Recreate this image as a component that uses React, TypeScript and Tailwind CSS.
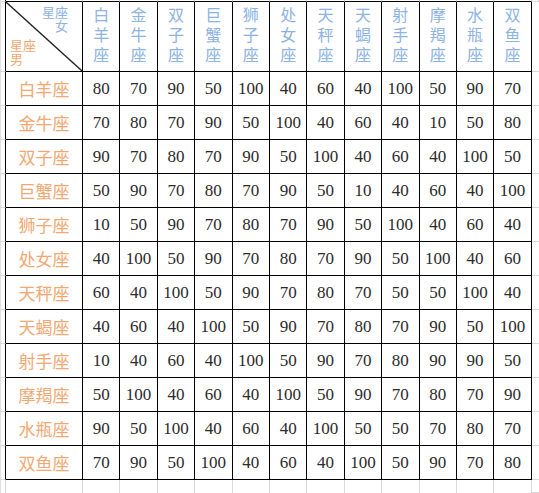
import React from "react";

const signs = ["白羊座", "金牛座", "双子座", "巨蟹座", "狮子座", "处女座", "天秤座", "天蝎座", "射手座", "摩羯座", "水瓶座", "双鱼座"];

const data: number[][] = [
  [80, 70, 90, 50, 100, 40, 60, 40, 100, 50, 90, 70],
  [70, 80, 70, 90, 50, 100, 40, 60, 40, 10, 50, 80],
  [90, 70, 80, 70, 90, 50, 100, 40, 60, 40, 100, 50],
  [50, 90, 70, 80, 70, 90, 50, 10, 40, 60, 40, 100],
  [10, 50, 90, 70, 80, 70, 90, 50, 100, 40, 60, 40],
  [40, 100, 50, 90, 70, 80, 70, 90, 50, 100, 40, 60],
  [60, 40, 100, 50, 90, 70, 80, 70, 50, 50, 100, 40],
  [40, 60, 40, 100, 50, 90, 70, 80, 70, 90, 50, 100],
  [10, 40, 60, 40, 100, 50, 90, 70, 80, 90, 90, 50],
  [50, 100, 40, 60, 40, 100, 50, 90, 70, 80, 70, 90],
  [90, 50, 100, 40, 60, 40, 100, 50, 50, 70, 80, 70],
  [70, 90, 50, 100, 40, 60, 40, 100, 50, 90, 70, 80],
];

const cjk = { fontFamily: '"Noto Sans CJK SC", sans-serif' };
const num = { fontFamily: '"Liberation Serif", serif' };

export default function App() {
  const cells: React.ReactNode[] = [];
  for (let r = 0; r < 15; r++) {
    for (let c = 0; c < 15; c++) {
      const key = `${r}-${c}`;
      const inTableRow = r >= 1 && r <= 13;
      const inTableCol = c >= 1 && c <= 13;
      if (inTableRow && inTableCol) {
        if (r === 1 && c === 1) {
          cells.push(
            <div key={key} className="relative border-r border-b border-black flex flex-col justify-between" style={cjk}>
              <svg className="absolute inset-0" width="100%" height="100%" viewBox="0 0 76 69" preserveAspectRatio="none">
                <line x1="0" y1="0" x2="76" y2="69" stroke="#222" strokeWidth="1.3" />
              </svg>
              <div className="self-end pr-[14px] pt-[3px] text-right whitespace-pre-line text-[13px] leading-[14px] text-[#8db3e2]">
                {"星座\n女"}
              </div>
              <div className="self-start pl-[4px] pb-[5px] text-left whitespace-pre-line text-[13px] leading-[14px] text-[#f2a872]">
                {"星座\n男"}
              </div>
            </div>
          );
        } else if (r === 1) {
          const s = signs[c - 2];
          cells.push(
            <div key={key} className="border-r border-b border-black flex items-center justify-center pt-[1px]" style={cjk}>
              <span className="[writing-mode:vertical-rl] text-[16px] leading-[20px] tracking-[4px] text-[#8db3e2]">{s}</span>
            </div>
          );
        } else if (c === 1) {
          cells.push(
            <div key={key} className="border-r border-b border-black flex items-center justify-center text-[17px] text-[#f2a872]" style={cjk}>
              {signs[r - 2]}
            </div>
          );
        } else {
          cells.push(
            <div key={key} className="border-r border-b border-black flex items-center justify-center text-[17px] text-[#2b2b2b]" style={num}>
              {data[r - 2][c - 2]}
            </div>
          );
        }
      } else {
        let cls = "";
        if (r === 0) {
          cls = c >= 1 && c <= 13 ? "border-b border-black border-r border-r-[#d9d9d9]" : "border-r border-b border-[#d9d9d9]";
          if (c === 0) cls = "border-r border-r-black border-b border-b-[#d9d9d9]";
        } else if (c === 0) {
          cls = r <= 13 ? "border-r border-r-black border-b border-b-[#d9d9d9]" : "border-r border-[#d9d9d9]";
        } else if (c === 14) {
          cls = "border-b border-[#d9d9d9]";
        } else if (r === 14) {
          cls = "border-r border-[#d9d9d9]";
        }
        cells.push(<div key={key} className={cls} />);
      }
    }
  }
  return (
    <div className="w-[539px] h-[493px] bg-white overflow-hidden">
      <div className="grid h-full w-full border-l border-[#e0e0e0] grid-cols-[5px_77px_repeat(12,37.4px)_1fr] grid-rows-[2px_70px_repeat(12,34px)_1fr]">
        {cells}
      </div>
    </div>
  );
}
